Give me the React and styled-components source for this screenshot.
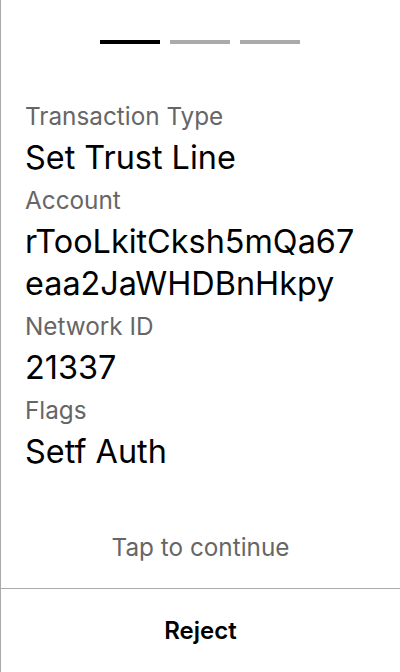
import React from "react";
import styled, { createGlobalStyle } from "styled-components";

const Global = createGlobalStyle`
  html, body { margin: 0; padding: 0; background: #fff; }
  body { font-family: Inter, "Noto Sans", sans-serif; }
`;

const Screen = styled.div`
  width: 400px;
  height: 672px;
  box-sizing: border-box;
  border-left: 1px solid #aaaaaa;
  display: flex;
  flex-direction: column;
  background: #fff;
`;

const Progress = styled.div`
  display: flex;
  justify-content: center;
  gap: 10px;
  padding-top: 40px;
  margin-left: -1px;
`;

const Bar = styled.div`
  width: 60px;
  height: 4px;
  background: ${(p) => (p.$active ? "#000" : "#aaaaaa")};
`;

const Details = styled.div`
  flex: 1;
  padding: 51px 34px 0 24px;
  display: flex;
  flex-direction: column;
`;

const Label = styled.div`
  font-size: 24.3px;
  line-height: 42px;
  color: #666;
`;

const Value = styled.div`
  font-size: 32.4px;
  line-height: 42px;
  color: #000;
  word-break: break-all;
`;

const Hint = styled.div`
  text-align: center;
  font-size: 24.3px;
  line-height: 42px;
  color: #666;
  padding-bottom: 20px;
`;

const Footer = styled.button`
  all: unset;
  box-sizing: border-box;
  height: 84px;
  border-top: 1px solid #aaaaaa;
  display: flex;
  align-items: center;
  justify-content: center;
  font-family: Inter, "Noto Sans", sans-serif;
  font-size: 24px;
  font-weight: 600;
  color: #000;
`;

const rows = [
  ["Transaction Type", "Set Trust Line"],
  ["Account", "rTooLkitCksh5mQa67eaa2JaWHDBnHkpy"],
  ["Network ID", "21337"],
  ["Flags", "Setf Auth"],
];

export default function App() {
  return (
    <>
      <Global />
      <Screen>
        <Progress>
          <Bar $active />
          <Bar />
          <Bar />
        </Progress>
        <Details>
          {rows.map(([l, v]) => (
            <React.Fragment key={l}>
              <Label>{l}</Label>
              <Value>{v}</Value>
            </React.Fragment>
          ))}
        </Details>
        <Hint>Tap to continue</Hint>
        <Footer>Reject</Footer>
      </Screen>
    </>
  );
}
